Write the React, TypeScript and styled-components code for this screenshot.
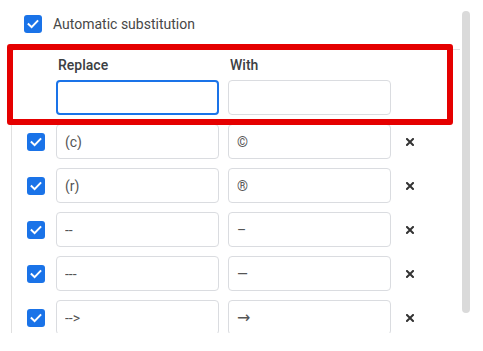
import React from "react";
import styled, { createGlobalStyle } from "styled-components";

const Global = createGlobalStyle`
  html, body { margin: 0; padding: 0; background: #ffffff; }
  body { font-family: Roboto, "Noto Sans", Arial, sans-serif; }
`;

const Page = styled.div`
  position: relative;
  display: flex;
  align-items: flex-start;
  width: 483px;
  height: 351px;
  overflow: hidden;
  background: #fff;
`;

const Scroller = styled.div`
  margin-top: 8px;
  width: 460px;
  height: 325px;
  overflow: hidden;
`;

const ScrollBar = styled.div`
  margin-top: 8px;
  width: 12px;
  height: 325px;
  box-sizing: border-box;
  padding: 3px 2px;
`;

const Thumb = styled.div`
  height: 302px;
  border-radius: 4px;
  background: #dadada;
`;

const Content = styled.div`
  padding: 7px 0 16px 0;
`;

const TopRow = styled.label`
  display: flex;
  align-items: center;
  gap: 11px;
  margin-left: 24px;
  height: 18px;
  font-size: 14px;
  color: #474747;
`;

const Box = styled.span`
  width: 18px;
  height: 18px;
  border-radius: 3px;
  background: #1a73e8;
  display: inline-flex;
  align-items: center;
  justify-content: center;
  flex: none;
`;

const Panel = styled.div`
  margin: 16px 0 0 11px;
  width: 445px;
  border: 1px solid #e0e0e0;
  border-radius: 4px;
  padding: 7px 0 9px 15px;
`;

const Grid = styled.div`
  display: grid;
  grid-template-columns: 20px 163px 163px 20px;
  column-gap: 9px;
  row-gap: 9px;
  align-items: center;
`;

const HeadLabel = styled.div`
  font-family: "Roboto Medium", Roboto, "Noto Sans", Arial, sans-serif;
  font-size: 14px;
  line-height: 16px;
  font-weight: 500;
  color: #3c4043;
  padding-left: 2px;
  margin-bottom: -2px;
`;

const Field = styled.input<{ $focused?: boolean; $symbol?: boolean }>`
  box-sizing: border-box;
  width: 163px;
  height: 35px;
  border: ${(p) => (p.$focused ? "2px solid #1a73e8" : "1px solid #dadce0")};
  border-radius: 4px;
  padding: 0 ${(p) => (p.$focused ? "7px" : "8px")};
  font-family: Roboto, "DejaVu Sans", Arial, sans-serif;
  font-size: ${(p) => (p.$symbol ? "16px" : "14px")};
  color: #555;
  background: #fff;
  outline: none;
  caret-color: #202124;
`;

const Remove = styled.span`
  display: flex;
  align-items: center;
  justify-content: center;
`;

const Overlay = styled.div`
  position: absolute;
  left: 7px;
  top: 44px;
  width: 446px;
  height: 81px;
  box-sizing: border-box;
  border: 6px solid #e50000;
  border-radius: 3px;
  pointer-events: none;
`;

const Check = () => (
  <Box>
    <svg width="14" height="14" viewBox="0 0 14 14">
      <path d="M2.6 7.2 L5.6 10.1 L11.4 4.1" fill="none" stroke="#fff" strokeWidth="2" strokeLinecap="square" />
    </svg>
  </Box>
);

const Cross = () => (
  <svg width="8" height="8" viewBox="0 0 8 8">
    <path d="M1 1 L7 7 M7 1 L1 7" stroke="#333" strokeWidth="2" strokeLinecap="square" />
  </svg>
);

const rows: [string, string, boolean][] = [
  ["(c)", "©", false],
  ["(r)", "®", false],
  ["--", "–", false],
  ["---", "—", false],
  ["-->", "→", true],
];

export default function App() {
  return (
    <Page>
      <Global />
      <Scroller>
        <Content>
          <TopRow>
            <Check />
            <span>Automatic substitution</span>
          </TopRow>
          <Panel>
            <Grid>
              <span />
              <HeadLabel>Replace</HeadLabel>
              <HeadLabel>With</HeadLabel>
              <span />
              <span />
              <Field $focused autoFocus defaultValue="" />
              <Field defaultValue="" />
              <span />
              {rows.map(([a, b, sym]) => (
                <React.Fragment key={a}>
                  <Check />
                  <Field defaultValue={a} />
                  <Field defaultValue={b} $symbol={sym} />
                  <Remove>
                    <Cross />
                  </Remove>
                </React.Fragment>
              ))}
            </Grid>
          </Panel>
        </Content>
      </Scroller>
      <ScrollBar>
        <Thumb />
      </ScrollBar>
      <Overlay />
    </Page>
  );
}
